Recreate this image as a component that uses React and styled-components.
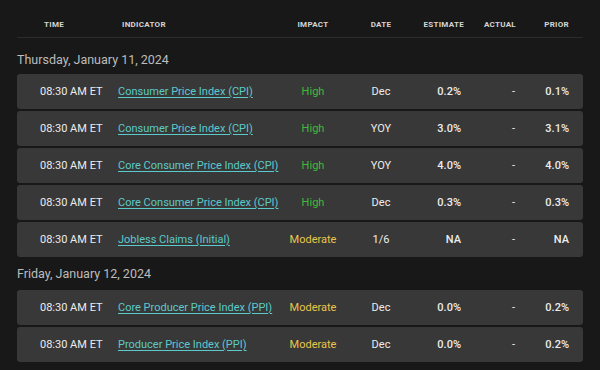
import React from 'react';
import styled, { createGlobalStyle } from 'styled-components';

const GlobalStyle = createGlobalStyle`
  html, body {
    margin: 0;
    padding: 0;
    background: #181818;
  }
  body {
    font-family: Roboto, "Liberation Sans", Arial, sans-serif;
    -webkit-font-smoothing: antialiased;
  }
`;

const days = [
  {
    title: "Thursday, January 11, 2024",
    events: [
      { time: "08:30 AM ET", name: "Consumer Price Index (CPI)", impact: "High", date: "Dec", estimate: "0.2%", actual: "-", prior: "0.1%" },
      { time: "08:30 AM ET", name: "Consumer Price Index (CPI)", impact: "High", date: "YOY", estimate: "3.0%", actual: "-", prior: "3.1%" },
      { time: "08:30 AM ET", name: "Core Consumer Price Index (CPI)", impact: "High", date: "YOY", estimate: "4.0%", actual: "-", prior: "4.0%" },
      { time: "08:30 AM ET", name: "Core Consumer Price Index (CPI)", impact: "High", date: "Dec", estimate: "0.3%", actual: "-", prior: "0.3%" },
      { time: "08:30 AM ET", name: "Jobless Claims (Initial)", impact: "Moderate", date: "1/6", estimate: "NA", actual: "-", prior: "NA" }
    ]
  },
  {
    title: "Friday, January 12, 2024",
    events: [
      { time: "08:30 AM ET", name: "Core Producer Price Index (PPI)", impact: "Moderate", date: "Dec", estimate: "0.0%", actual: "-", prior: "0.2%" },
      { time: "08:30 AM ET", name: "Producer Price Index (PPI)", impact: "Moderate", date: "Dec", estimate: "0.0%", actual: "-", prior: "0.2%" }
    ]
  }
];

export default function App() {
  return (
    <>
      <GlobalStyle />
      <Page>
        <HeaderRow>
          <HeadCell $pad="0 0 0 27px">Time</HeadCell>
          <HeadCell $pad="0 0 0 12px">Indicator</HeadCell>
          <HeadCell $align="center">Impact</HeadCell>
          <HeadCell $align="center">Date</HeadCell>
          <HeadCell $align="right" $pad="0 6px 0 0">Estimate</HeadCell>
          <HeadCell $align="right" $pad="0 6px 0 0">Actual</HeadCell>
          <HeadCell $align="right" $pad="0 14px 0 0">Prior</HeadCell>
        </HeaderRow>
        {days.map((day) => (
          <Section key={day.title}>
            <DayTitle>{day.title}</DayTitle>
            <Rows>
              {day.events.map((ev, i) => (
                <Row key={i}>
                  <Cell $pad="0 0 0 23px">{ev.time}</Cell>
                  <Cell $pad="0 0 0 8px">
                    <IndicatorLink href="#">{ev.name}</IndicatorLink>
                  </Cell>
                  <Impact $level={ev.impact}>{ev.impact}</Impact>
                  <Cell $align="center">{ev.date}</Cell>
                  <Cell $align="right" $pad="0 9px 0 0" $weight={500}>{ev.estimate}</Cell>
                  <Cell $align="right" $pad="0 7px 0 0">{ev.actual}</Cell>
                  <Cell $align="right" $pad="0 14px 0 0" $weight={500}>{ev.prior}</Cell>
                </Row>
              ))}
            </Rows>
          </Section>
        ))}
      </Page>
    </>
  );
}

const cols = "93px 170px 66px 70px 54px 52px 61px";

const Page = styled.div`
  width: 600px;
  height: 370px;
  overflow: hidden;
  padding: 0 17px;
  box-sizing: border-box;
`;

const HeaderRow = styled.div`
  display: grid;
  grid-template-columns: ${cols};
  align-items: center;
  height: 38px;
  padding-top: 11px;
  box-sizing: border-box;
  border-bottom: 1px solid #2c2c2c;
  margin-bottom: 3px;
`;

const HeadCell = styled.div`
  font-size: 8px;
  font-weight: 700;
  letter-spacing: 0.3px;
  text-transform: uppercase;
  color: #d4d4d4;
  text-align: ${(p) => p.$align || "left"};
  padding: ${(p) => p.$pad || "0"};
`;

const Section = styled.section`
  & + & h2 {
    padding: 9px 0 8px;
  }
`;

const DayTitle = styled.h2`
  margin: 0;
  padding: 11px 0 6px;
  font-size: 12.5px;
  line-height: 16px;
  font-weight: 400;
  color: #bdbdbd;
`;

const Rows = styled.div`
  display: flex;
  flex-direction: column;
  gap: 2px;
`;

const Row = styled.div`
  display: grid;
  grid-template-columns: ${cols};
  align-items: center;
  height: 35px;
  background: #383838;
  border-radius: 3px;
`;

const Cell = styled.div`
  font-size: 11px;
  color: #ececec;
  font-weight: ${(p) => p.$weight || 400};
  text-align: ${(p) => p.$align || "left"};
  padding: ${(p) => p.$pad || "0"};
  white-space: nowrap;
`;

const IndicatorLink = styled.a`
  color: #5ccaca;
  text-decoration: underline;
  text-underline-offset: 2px;
`;

const Impact = styled.div`
  font-size: 11px;
  text-align: center;
  color: ${(p) => (p.$level === "High" ? "#3dbb3d" : "#e8c54a")};
`;
